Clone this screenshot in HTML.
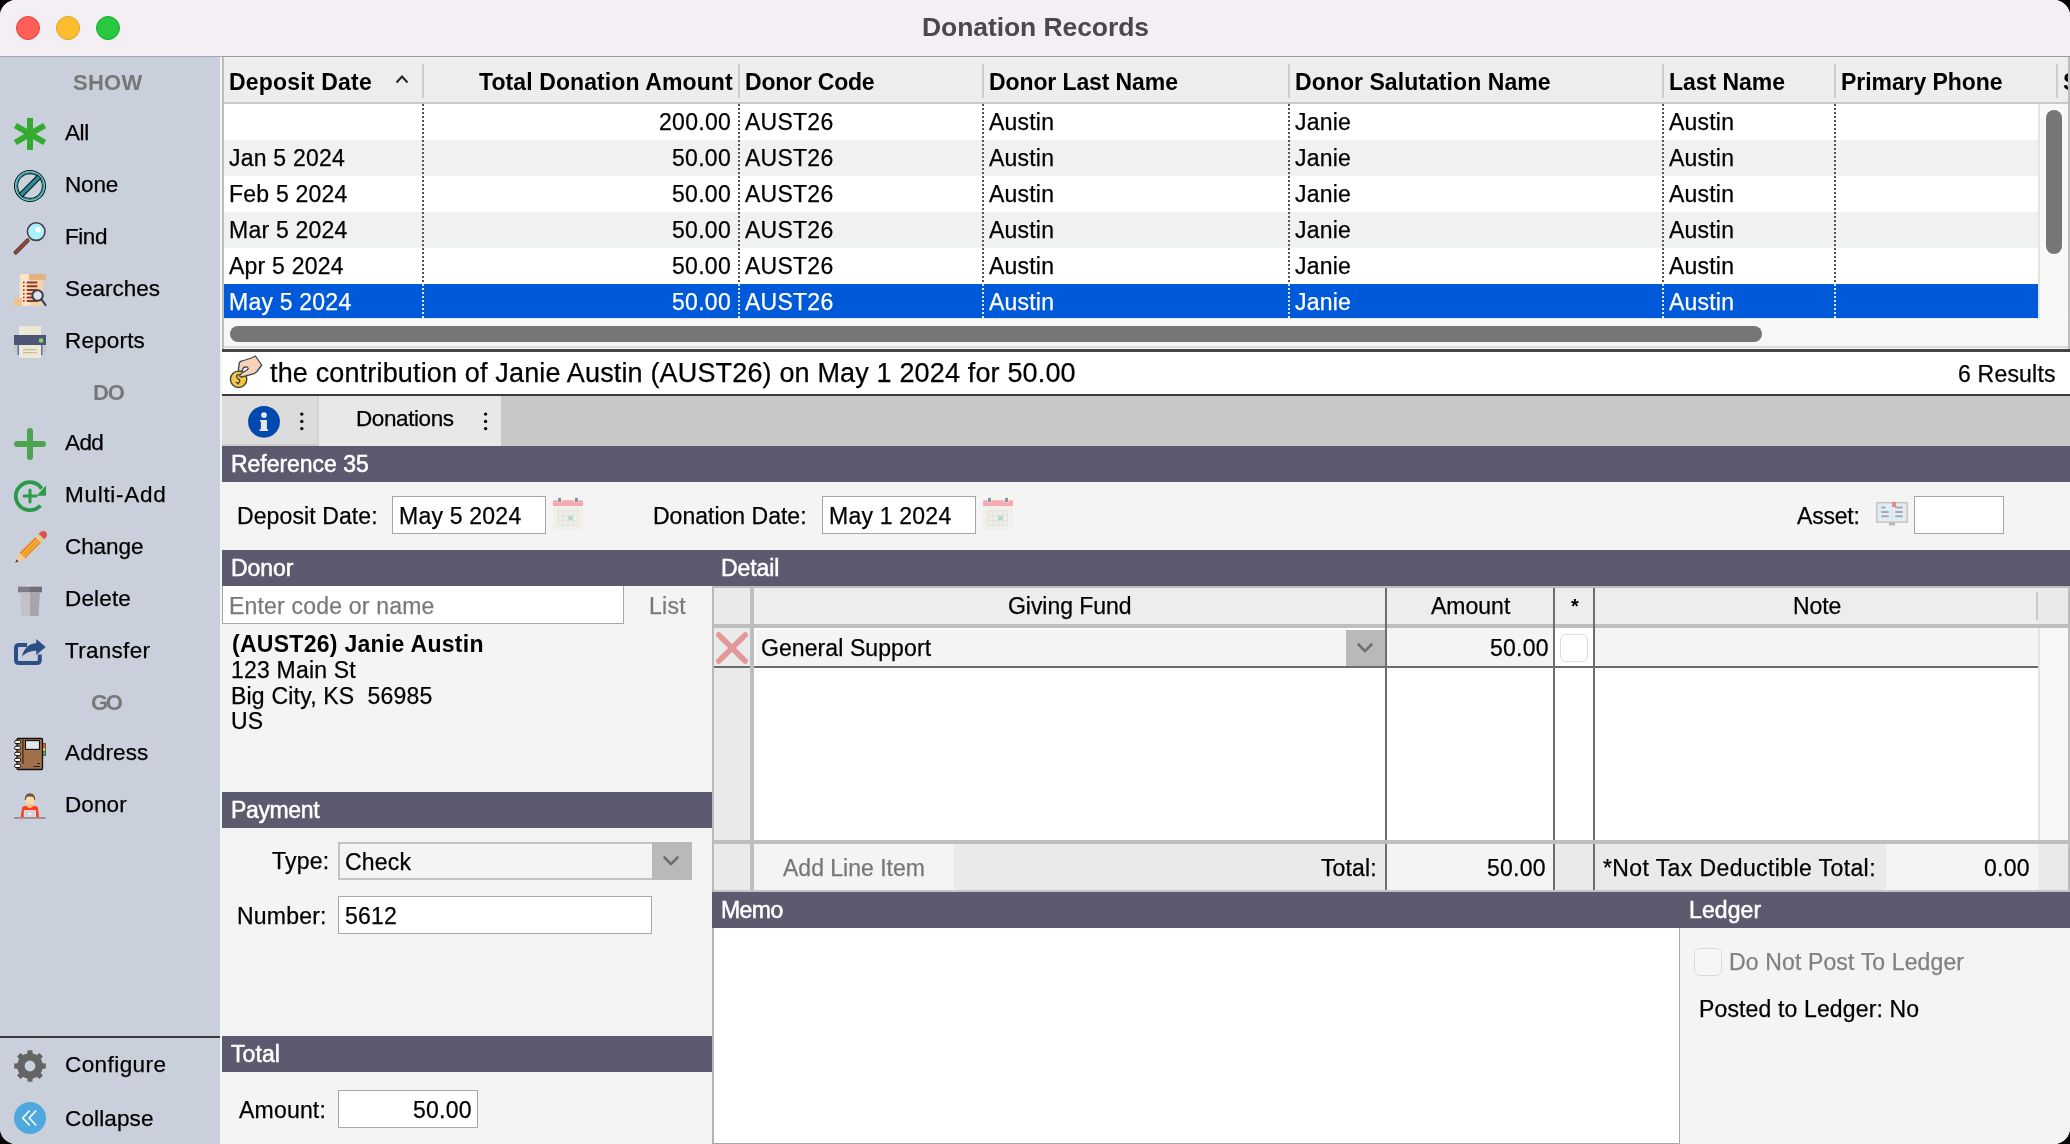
<!DOCTYPE html>
<html><head><meta charset="utf-8"><style>
html,body{margin:0;padding:0;background:#000;width:2070px;height:1144px;overflow:hidden;}
#win{-webkit-font-smoothing:antialiased;position:absolute;left:0;top:0;width:2070px;height:1144px;overflow:hidden;border-radius:16px;background:#f4f4f4;font-family:"Liberation Sans",sans-serif;}
#win>div,#win>svg{position:absolute;}
.t{white-space:pre;will-change:transform;-webkit-text-stroke:0.25px currentColor;}
</style></head><body><div id="win">
<div style="left:0px;top:0px;width:2070px;height:56px;background:#f4eff5;"></div>
<div style="left:0px;top:56px;width:222px;height:1px;background:#a3a9b2;"></div>
<div style="left:222px;top:56px;width:1848px;height:2px;background:#9c9c9c;"></div>
<svg style="left:16px;top:16px" width="24" height="24"><circle cx="12" cy="12" r="11.5" fill="#fe5f57" stroke="#e0443e" stroke-width="1"/></svg>
<svg style="left:56px;top:16px" width="24" height="24"><circle cx="12" cy="12" r="11.5" fill="#febc2e" stroke="#dea123" stroke-width="1"/></svg>
<svg style="left:96px;top:16px" width="24" height="24"><circle cx="12" cy="12" r="11.5" fill="#28c840" stroke="#1aab29" stroke-width="1"/></svg>
<div class="t" style="left:921.50px;top:9.82px;font-size:26.5px;line-height:34px;letter-spacing:-0.083px;color:#4b484d;font-weight:bold;-webkit-text-stroke:0;">Donation Records</div>
<div style="left:0px;top:57px;width:220px;height:1087px;background:#c9d0db;"></div>
<div style="left:0px;top:1036px;width:220px;height:2px;background:#3d3a3b;"></div>
<div class="t" style="left:72.75px;top:67.88px;font-size:22px;line-height:29px;letter-spacing:0.267px;color:#777777;font-weight:bold;-webkit-text-stroke:0;">SHOW</div>
<div class="t" style="left:93.05px;top:377.88px;font-size:22px;line-height:29px;letter-spacing:-1.100px;color:#777777;font-weight:bold;-webkit-text-stroke:0;">DO</div>
<div class="t" style="left:91.00px;top:687.88px;font-size:22px;line-height:29px;letter-spacing:-2.250px;color:#777777;font-weight:bold;-webkit-text-stroke:0;">GO</div>
<div class="t" style="left:64.60px;top:117.70px;font-size:22.5px;line-height:29px;letter-spacing:-0.400px;color:#000;">All</div>
<div class="t" style="left:64.60px;top:169.70px;font-size:22.5px;line-height:29px;letter-spacing:-0.183px;color:#000;">None</div>
<div class="t" style="left:64.60px;top:221.70px;font-size:22.5px;line-height:29px;letter-spacing:-0.450px;color:#000;">Find</div>
<div class="t" style="left:64.60px;top:273.70px;font-size:22.5px;line-height:29px;letter-spacing:0.000px;color:#000;">Searches</div>
<div class="t" style="left:64.60px;top:325.70px;font-size:22.5px;line-height:29px;letter-spacing:0.175px;color:#000;">Reports</div>
<div class="t" style="left:64.60px;top:427.70px;font-size:22.5px;line-height:29px;letter-spacing:-0.600px;color:#000;">Add</div>
<div class="t" style="left:64.60px;top:479.70px;font-size:22.5px;line-height:29px;letter-spacing:0.713px;color:#000;">Multi-Add</div>
<div class="t" style="left:64.60px;top:531.70px;font-size:22.5px;line-height:29px;letter-spacing:-0.070px;color:#000;">Change</div>
<div class="t" style="left:64.60px;top:583.70px;font-size:22.5px;line-height:29px;letter-spacing:0.160px;color:#000;">Delete</div>
<div class="t" style="left:64.60px;top:635.70px;font-size:22.5px;line-height:29px;letter-spacing:0.286px;color:#000;">Transfer</div>
<div class="t" style="left:64.60px;top:737.70px;font-size:22.5px;line-height:29px;letter-spacing:0.133px;color:#000;">Address</div>
<div class="t" style="left:64.60px;top:789.70px;font-size:22.5px;line-height:29px;letter-spacing:0.088px;color:#000;">Donor</div>
<div class="t" style="left:64.60px;top:1049.70px;font-size:22.5px;line-height:29px;letter-spacing:0.425px;color:#000;">Configure</div>
<div class="t" style="left:64.60px;top:1103.70px;font-size:22.5px;line-height:29px;letter-spacing:0.129px;color:#000;">Collapse</div>
<div style="left:220px;top:57px;width:1850px;height:1087px;background:#f4f4f4;"></div>
<div style="left:222px;top:57px;width:2px;height:293px;background:#bdbdbd;"></div>
<div style="left:224px;top:57px;width:1844px;height:45px;background:#ededed;"></div>
<div style="left:224px;top:102px;width:1844px;height:2px;background:#c9c9c9;"></div>
<div style="left:2068px;top:57px;width:2px;height:293px;background:#bdbdbd;"></div>
<div style="left:224px;top:104px;width:1814px;height:36px;background:#ffffff;"></div>
<div style="left:224px;top:140px;width:1814px;height:36px;background:#f0f1f1;"></div>
<div style="left:224px;top:176px;width:1814px;height:36px;background:#ffffff;"></div>
<div style="left:224px;top:212px;width:1814px;height:36px;background:#f0f1f1;"></div>
<div style="left:224px;top:248px;width:1814px;height:36px;background:#ffffff;"></div>
<div style="left:224px;top:284px;width:1814px;height:34px;background:#0059d9;"></div>
<div style="left:422px;top:64px;width:2px;height:34px;background:#cdcdcd;"></div>
<div style="left:738px;top:64px;width:2px;height:34px;background:#cdcdcd;"></div>
<div style="left:982px;top:64px;width:2px;height:34px;background:#cdcdcd;"></div>
<div style="left:1288px;top:64px;width:2px;height:34px;background:#cdcdcd;"></div>
<div style="left:1662px;top:64px;width:2px;height:34px;background:#cdcdcd;"></div>
<div style="left:1834px;top:64px;width:2px;height:34px;background:#cdcdcd;"></div>
<div style="left:2056px;top:64px;width:2px;height:34px;background:#cdcdcd;"></div>
<div style="left:422px;top:104px;width:2px;height:180px;background:repeating-linear-gradient(#555 0 2px,transparent 2px 4px)"></div>
<div style="left:422px;top:284px;width:2px;height:34px;background:repeating-linear-gradient(#dfe8f8 0 2px,transparent 2px 4px)"></div>
<div style="left:738px;top:104px;width:2px;height:180px;background:repeating-linear-gradient(#555 0 2px,transparent 2px 4px)"></div>
<div style="left:738px;top:284px;width:2px;height:34px;background:repeating-linear-gradient(#dfe8f8 0 2px,transparent 2px 4px)"></div>
<div style="left:982px;top:104px;width:2px;height:180px;background:repeating-linear-gradient(#555 0 2px,transparent 2px 4px)"></div>
<div style="left:982px;top:284px;width:2px;height:34px;background:repeating-linear-gradient(#dfe8f8 0 2px,transparent 2px 4px)"></div>
<div style="left:1288px;top:104px;width:2px;height:180px;background:repeating-linear-gradient(#555 0 2px,transparent 2px 4px)"></div>
<div style="left:1288px;top:284px;width:2px;height:34px;background:repeating-linear-gradient(#dfe8f8 0 2px,transparent 2px 4px)"></div>
<div style="left:1662px;top:104px;width:2px;height:180px;background:repeating-linear-gradient(#555 0 2px,transparent 2px 4px)"></div>
<div style="left:1662px;top:284px;width:2px;height:34px;background:repeating-linear-gradient(#dfe8f8 0 2px,transparent 2px 4px)"></div>
<div style="left:1834px;top:104px;width:2px;height:180px;background:repeating-linear-gradient(#555 0 2px,transparent 2px 4px)"></div>
<div style="left:1834px;top:284px;width:2px;height:34px;background:repeating-linear-gradient(#dfe8f8 0 2px,transparent 2px 4px)"></div>
<div class="t" style="left:229.00px;top:67.03px;font-size:23px;line-height:30px;letter-spacing:0.191px;color:#000;font-weight:bold;-webkit-text-stroke:0;">Deposit Date</div>
<svg style="left:395px;top:74px" width="14" height="10"><path d="M1.5 8.5 L7 2.5 L12.5 8.5" fill="none" stroke="#222" stroke-width="2"/></svg>
<div class="t" style="left:478.80px;top:67.03px;font-size:23px;line-height:30px;letter-spacing:0.097px;color:#000;font-weight:bold;-webkit-text-stroke:0;">Total Donation Amount</div>
<div class="t" style="left:745.00px;top:67.03px;font-size:23px;line-height:30px;letter-spacing:-0.222px;color:#000;font-weight:bold;-webkit-text-stroke:0;">Donor Code</div>
<div class="t" style="left:989.00px;top:67.03px;font-size:23px;line-height:30px;letter-spacing:-0.107px;color:#000;font-weight:bold;-webkit-text-stroke:0;">Donor Last Name</div>
<div class="t" style="left:1295.00px;top:67.03px;font-size:23px;line-height:30px;letter-spacing:0.062px;color:#000;font-weight:bold;-webkit-text-stroke:0;">Donor Salutation Name</div>
<div class="t" style="left:1669.00px;top:67.03px;font-size:23px;line-height:30px;letter-spacing:-0.031px;color:#000;font-weight:bold;-webkit-text-stroke:0;">Last Name</div>
<div class="t" style="left:1841.00px;top:67.03px;font-size:23px;line-height:30px;letter-spacing:-0.062px;color:#000;font-weight:bold;-webkit-text-stroke:0;">Primary Phone</div>
<div class="t" style="left:2062.50px;top:67.03px;font-size:23px;line-height:30px;letter-spacing:0.000px;color:#000;font-weight:bold;-webkit-text-stroke:0;">S</div>
<div style="left:2068px;top:57px;width:2px;height:293px;background:#bdbdbd;"></div>
<div class="t" style="left:659.35px;top:107.03px;font-size:23px;line-height:30px;letter-spacing:0.280px;color:#000;">200.00</div>
<div class="t" style="left:745.00px;top:107.03px;font-size:23px;line-height:30px;letter-spacing:0.250px;color:#000;">AUST26</div>
<div class="t" style="left:989.00px;top:107.03px;font-size:23px;line-height:30px;letter-spacing:0.200px;color:#000;">Austin</div>
<div class="t" style="left:1295.00px;top:107.03px;font-size:23px;line-height:30px;letter-spacing:0.200px;color:#000;">Janie</div>
<div class="t" style="left:1669.00px;top:107.03px;font-size:23px;line-height:30px;letter-spacing:0.200px;color:#000;">Austin</div>
<div class="t" style="left:229.00px;top:143.03px;font-size:23px;line-height:30px;letter-spacing:0.220px;color:#000;">Jan 5 2024</div>
<div class="t" style="left:672.38px;top:143.03px;font-size:23px;line-height:30px;letter-spacing:0.280px;color:#000;">50.00</div>
<div class="t" style="left:745.00px;top:143.03px;font-size:23px;line-height:30px;letter-spacing:0.250px;color:#000;">AUST26</div>
<div class="t" style="left:989.00px;top:143.03px;font-size:23px;line-height:30px;letter-spacing:0.200px;color:#000;">Austin</div>
<div class="t" style="left:1295.00px;top:143.03px;font-size:23px;line-height:30px;letter-spacing:0.200px;color:#000;">Janie</div>
<div class="t" style="left:1669.00px;top:143.03px;font-size:23px;line-height:30px;letter-spacing:0.200px;color:#000;">Austin</div>
<div class="t" style="left:229.00px;top:179.03px;font-size:23px;line-height:30px;letter-spacing:0.220px;color:#000;">Feb 5 2024</div>
<div class="t" style="left:672.38px;top:179.03px;font-size:23px;line-height:30px;letter-spacing:0.280px;color:#000;">50.00</div>
<div class="t" style="left:745.00px;top:179.03px;font-size:23px;line-height:30px;letter-spacing:0.250px;color:#000;">AUST26</div>
<div class="t" style="left:989.00px;top:179.03px;font-size:23px;line-height:30px;letter-spacing:0.200px;color:#000;">Austin</div>
<div class="t" style="left:1295.00px;top:179.03px;font-size:23px;line-height:30px;letter-spacing:0.200px;color:#000;">Janie</div>
<div class="t" style="left:1669.00px;top:179.03px;font-size:23px;line-height:30px;letter-spacing:0.200px;color:#000;">Austin</div>
<div class="t" style="left:229.00px;top:215.03px;font-size:23px;line-height:30px;letter-spacing:0.220px;color:#000;">Mar 5 2024</div>
<div class="t" style="left:672.38px;top:215.03px;font-size:23px;line-height:30px;letter-spacing:0.280px;color:#000;">50.00</div>
<div class="t" style="left:745.00px;top:215.03px;font-size:23px;line-height:30px;letter-spacing:0.250px;color:#000;">AUST26</div>
<div class="t" style="left:989.00px;top:215.03px;font-size:23px;line-height:30px;letter-spacing:0.200px;color:#000;">Austin</div>
<div class="t" style="left:1295.00px;top:215.03px;font-size:23px;line-height:30px;letter-spacing:0.200px;color:#000;">Janie</div>
<div class="t" style="left:1669.00px;top:215.03px;font-size:23px;line-height:30px;letter-spacing:0.200px;color:#000;">Austin</div>
<div class="t" style="left:229.00px;top:251.03px;font-size:23px;line-height:30px;letter-spacing:0.220px;color:#000;">Apr 5 2024</div>
<div class="t" style="left:672.38px;top:251.03px;font-size:23px;line-height:30px;letter-spacing:0.280px;color:#000;">50.00</div>
<div class="t" style="left:745.00px;top:251.03px;font-size:23px;line-height:30px;letter-spacing:0.250px;color:#000;">AUST26</div>
<div class="t" style="left:989.00px;top:251.03px;font-size:23px;line-height:30px;letter-spacing:0.200px;color:#000;">Austin</div>
<div class="t" style="left:1295.00px;top:251.03px;font-size:23px;line-height:30px;letter-spacing:0.200px;color:#000;">Janie</div>
<div class="t" style="left:1669.00px;top:251.03px;font-size:23px;line-height:30px;letter-spacing:0.200px;color:#000;">Austin</div>
<div class="t" style="left:229.00px;top:287.03px;font-size:23px;line-height:30px;letter-spacing:0.220px;color:#ffffff;">May 5 2024</div>
<div class="t" style="left:672.38px;top:287.03px;font-size:23px;line-height:30px;letter-spacing:0.280px;color:#ffffff;">50.00</div>
<div class="t" style="left:745.00px;top:287.03px;font-size:23px;line-height:30px;letter-spacing:0.250px;color:#ffffff;">AUST26</div>
<div class="t" style="left:989.00px;top:287.03px;font-size:23px;line-height:30px;letter-spacing:0.200px;color:#ffffff;">Austin</div>
<div class="t" style="left:1295.00px;top:287.03px;font-size:23px;line-height:30px;letter-spacing:0.200px;color:#ffffff;">Janie</div>
<div class="t" style="left:1669.00px;top:287.03px;font-size:23px;line-height:30px;letter-spacing:0.200px;color:#ffffff;">Austin</div>
<div style="left:2038px;top:104px;width:30px;height:214px;background:#f8f8f8;"></div>
<div style="left:2038px;top:104px;width:2px;height:214px;background:#e4e4e4;"></div>
<div style="left:2046px;top:110px;width:16px;height:144px;background:#767676;border-radius:8px;"></div>
<div style="left:224px;top:318px;width:1844px;height:30px;background:#f7f7f7;"></div>
<div style="left:224px;top:318px;width:1814px;height:1px;background:#e6e6e6;"></div>
<div style="left:224px;top:346px;width:1844px;height:2px;background:#dcdcdc;"></div>
<div style="left:230px;top:326px;width:1532px;height:16px;background:#767676;border-radius:8px;"></div>
<div style="left:222px;top:349px;width:1848px;height:3px;background:#454545;"></div>
<div style="left:222px;top:352px;width:1848px;height:42px;background:#ffffff;"></div>
<div style="left:222px;top:394px;width:1848px;height:2px;background:#3d3d3d;"></div>
<div class="t" style="left:270.00px;top:356.14px;font-size:27px;line-height:35px;letter-spacing:0.158px;color:#000;">the contribution of Janie Austin (AUST26) on May 1 2024 for 50.00</div>
<div class="t" style="left:1958.40px;top:359.03px;font-size:23px;line-height:30px;letter-spacing:0.200px;color:#000;">6 Results</div>
<div style="left:222px;top:396px;width:1848px;height:50px;background:#c8c8c8;"></div>
<div style="left:222px;top:396px;width:95px;height:50px;background:#dcdcdc;"></div>
<div style="left:222px;top:444px;width:95px;height:2px;background:#cccccc;"></div>
<div style="left:317px;top:396px;width:2px;height:50px;background:#d3d3d3;"></div>
<div style="left:319px;top:396px;width:182px;height:50px;background:#e8e8e8;"></div>
<div class="t" style="left:355.50px;top:403.70px;font-size:22.5px;line-height:29px;letter-spacing:-0.406px;color:#000;">Donations</div>
<div style="left:222px;top:446px;width:1848px;height:36px;background:#5c5a6e;"></div>
<div class="t" style="left:231.00px;top:449.03px;font-size:23px;line-height:30px;letter-spacing:-0.036px;color:#fff;-webkit-text-stroke:0.5px #fff;">Reference 35</div>
<div style="left:222px;top:550px;width:490px;height:36px;background:#5c5a6e;"></div>
<div style="left:712px;top:550px;width:1358px;height:36px;background:#5c5a6e;"></div>
<div class="t" style="left:230.60px;top:553.03px;font-size:23px;line-height:30px;letter-spacing:-0.088px;color:#fff;-webkit-text-stroke:0.5px #fff;">Donor</div>
<div class="t" style="left:721.00px;top:553.03px;font-size:23px;line-height:30px;letter-spacing:-0.090px;color:#fff;-webkit-text-stroke:0.5px #fff;">Detail</div>
<div style="left:222px;top:792px;width:490px;height:36px;background:#5c5a6e;"></div>
<div class="t" style="left:231.00px;top:794.53px;font-size:23px;line-height:30px;letter-spacing:-0.358px;color:#fff;-webkit-text-stroke:0.5px #fff;">Payment</div>
<div style="left:222px;top:1036px;width:490px;height:36px;background:#5c5a6e;"></div>
<div class="t" style="left:231.00px;top:1038.53px;font-size:23px;line-height:30px;letter-spacing:0.075px;color:#fff;-webkit-text-stroke:0.5px #fff;">Total</div>
<div style="left:712px;top:892px;width:1358px;height:36px;background:#5c5a6e;"></div>
<div class="t" style="left:721.00px;top:895.03px;font-size:23px;line-height:30px;letter-spacing:-0.567px;color:#fff;-webkit-text-stroke:0.5px #fff;">Memo</div>
<div class="t" style="left:1689.00px;top:894.53px;font-size:23px;line-height:30px;letter-spacing:0.090px;color:#fff;-webkit-text-stroke:0.5px #fff;">Ledger</div>
<div class="t" style="left:237.00px;top:501.03px;font-size:23px;line-height:30px;letter-spacing:0.104px;color:#000;">Deposit Date:</div>
<div style="left:392px;top:496px;width:154px;height:38px;background:#fff;box-sizing:border-box;border:1px solid #a5a5a5;"></div>
<div class="t" style="left:399.00px;top:501.03px;font-size:23px;line-height:30px;letter-spacing:0.220px;color:#000;">May 5 2024</div>
<div class="t" style="left:653.00px;top:501.03px;font-size:23px;line-height:30px;letter-spacing:0.008px;color:#000;">Donation Date:</div>
<div style="left:822px;top:496px;width:154px;height:38px;background:#fff;box-sizing:border-box;border:1px solid #a5a5a5;"></div>
<div class="t" style="left:829.00px;top:501.03px;font-size:23px;line-height:30px;letter-spacing:0.220px;color:#000;">May 1 2024</div>
<div class="t" style="left:1797.00px;top:501.03px;font-size:23px;line-height:30px;letter-spacing:-0.200px;color:#000;">Asset:</div>
<div style="left:1914px;top:496px;width:90px;height:38px;background:#fff;box-sizing:border-box;border:1px solid #a5a5a5;"></div>
<div style="left:222px;top:586px;width:402px;height:38px;background:#fff;box-sizing:border-box;border:1px solid #a8a8a8;border-top:none;"></div>
<div class="t" style="left:229.00px;top:591.03px;font-size:23px;line-height:30px;letter-spacing:0.200px;color:#7a7a7a;">Enter code or name</div>
<div class="t" style="left:649.00px;top:591.03px;font-size:23px;line-height:30px;letter-spacing:0.300px;color:#7a7a7a;">List</div>
<div class="t" style="left:231.60px;top:628.63px;font-size:23px;line-height:30px;letter-spacing:0.283px;color:#000;font-weight:bold;-webkit-text-stroke:0;">(AUST26) Janie Austin</div>
<div class="t" style="left:231.00px;top:654.73px;font-size:23px;line-height:30px;letter-spacing:0.200px;color:#000;">123 Main St</div>
<div class="t" style="left:231.00px;top:680.83px;font-size:23px;line-height:30px;letter-spacing:0.200px;color:#000;">Big City, KS  56985</div>
<div class="t" style="left:231.00px;top:706.43px;font-size:23px;line-height:30px;letter-spacing:0.200px;color:#000;">US</div>
<div class="t" style="left:271.65px;top:846.03px;font-size:23px;line-height:30px;letter-spacing:0.200px;color:#000;">Type:</div>
<div style="left:338px;top:842px;width:354px;height:38px;background:#f4f4f4;box-sizing:border-box;border:2px solid #c2c2c2;"></div>
<div style="left:652px;top:842px;width:40px;height:38px;background:#b9b9b9;"></div>
<div class="t" style="left:344.50px;top:847.03px;font-size:23px;line-height:30px;letter-spacing:0.200px;color:#000;">Check</div>
<div class="t" style="left:237.35px;top:901.03px;font-size:23px;line-height:30px;letter-spacing:0.200px;color:#000;">Number:</div>
<div style="left:338px;top:896px;width:314px;height:38px;background:#fff;box-sizing:border-box;border:1px solid #a8a8a8;"></div>
<div class="t" style="left:344.50px;top:901.03px;font-size:23px;line-height:30px;letter-spacing:0.200px;color:#000;">5612</div>
<div class="t" style="left:239.35px;top:1094.53px;font-size:23px;line-height:30px;letter-spacing:0.200px;color:#000;">Amount:</div>
<div style="left:338px;top:1090px;width:140px;height:38px;background:#fff;box-sizing:border-box;border:1px solid #a8a8a8;"></div>
<div class="t" style="left:412.70px;top:1094.53px;font-size:23px;line-height:30px;letter-spacing:0.250px;color:#000;">50.00</div>
<div style="left:712px;top:586px;width:1358px;height:306px;background:#ffffff;"></div>
<div style="left:712px;top:586px;width:2px;height:306px;background:#b9b9b9;"></div>
<div style="left:712px;top:586px;width:1358px;height:2px;background:#bdbdbd;"></div>
<div style="left:2068px;top:586px;width:2px;height:306px;background:#bdbdbd;"></div>
<div style="left:714px;top:588px;width:1354px;height:36px;background:#ededed;"></div>
<div style="left:714px;top:588px;width:36px;height:302px;background:#eaeaea;"></div>
<div style="left:750px;top:588px;width:4px;height:302px;background:#bebebe;"></div>
<div style="left:714px;top:624px;width:1354px;height:4px;background:#bebebe;"></div>
<div style="left:714px;top:840px;width:1354px;height:4px;background:#bebebe;"></div>
<div style="left:714px;top:890px;width:1356px;height:2px;background:#c4c4c4;"></div>
<div style="left:2038px;top:628px;width:30px;height:212px;background:#f7f7f7;"></div>
<div style="left:2038px;top:628px;width:2px;height:212px;background:#e2e2e2;"></div>
<div style="left:2038px;top:588px;width:30px;height:36px;background:#eaeaea;"></div>
<div style="left:2036px;top:592px;width:2px;height:28px;background:#c9c9c9;"></div>
<div style="left:756px;top:630px;width:590px;height:36px;background:#f4f4f4;"></div>
<div style="left:1346px;top:630px;width:39px;height:36px;background:#b9b9b9;"></div>
<div style="left:1387px;top:628px;width:166px;height:38px;background:#f4f4f4;"></div>
<div style="left:1595px;top:628px;width:443px;height:38px;background:#f4f4f4;"></div>
<div style="left:714px;top:666px;width:1324px;height:2px;background:#6b6b6b;"></div>
<div style="left:750px;top:628px;width:4px;height:212px;background:#bebebe;"></div>
<div style="left:754px;top:844px;width:1284px;height:46px;background:#eaeaea;"></div>
<div style="left:754px;top:844px;width:200px;height:46px;background:#f4f4f4;"></div>
<div style="left:1387px;top:844px;width:166px;height:46px;background:#f4f4f4;"></div>
<div style="left:1886px;top:844px;width:152px;height:46px;background:#f4f4f4;"></div>
<div style="left:2038px;top:844px;width:30px;height:46px;background:#eaeaea;"></div>
<div style="left:1385px;top:588px;width:2px;height:252px;background:#6e6e6e;"></div>
<div style="left:1385px;top:844px;width:2px;height:46px;background:#6e6e6e;"></div>
<div style="left:1553px;top:588px;width:2px;height:252px;background:#6e6e6e;"></div>
<div style="left:1553px;top:844px;width:2px;height:46px;background:#6e6e6e;"></div>
<div style="left:1593px;top:588px;width:2px;height:252px;background:#6e6e6e;"></div>
<div style="left:1593px;top:844px;width:2px;height:46px;background:#6e6e6e;"></div>
<div class="t" style="left:1008.25px;top:591.03px;font-size:23px;line-height:30px;letter-spacing:-0.050px;color:#000;">Giving Fund</div>
<div class="t" style="left:1431.35px;top:591.03px;font-size:23px;line-height:30px;letter-spacing:0.010px;color:#000;">Amount</div>
<div class="t" style="left:1571.00px;top:592.57px;font-size:20px;line-height:26px;letter-spacing:0.000px;color:#000;font-weight:bold;-webkit-text-stroke:0;">*</div>
<div class="t" style="left:1792.85px;top:591.03px;font-size:23px;line-height:30px;letter-spacing:-0.067px;color:#000;">Note</div>
<div class="t" style="left:761.00px;top:633.03px;font-size:23px;line-height:30px;letter-spacing:0.089px;color:#000;">General Support</div>
<div class="t" style="left:1490.30px;top:632.53px;font-size:23px;line-height:30px;letter-spacing:0.250px;color:#000;">50.00</div>
<div style="left:1560px;top:634px;width:28px;height:28px;background:#fff;box-sizing:border-box;border:1px solid #dcdcdc;border-radius:6px;"></div>
<div class="t" style="left:782.60px;top:853.03px;font-size:23px;line-height:30px;letter-spacing:0.000px;color:#777;">Add Line Item</div>
<div class="t" style="left:1321.00px;top:853.03px;font-size:23px;line-height:30px;letter-spacing:0.120px;color:#000;">Total:</div>
<div class="t" style="left:1486.50px;top:853.03px;font-size:23px;line-height:30px;letter-spacing:0.250px;color:#000;">50.00</div>
<div class="t" style="left:1602.70px;top:853.03px;font-size:23px;line-height:30px;letter-spacing:0.400px;color:#000;">*Not Tax Deductible Total:</div>
<div class="t" style="left:1983.50px;top:853.03px;font-size:23px;line-height:30px;letter-spacing:0.250px;color:#000;">0.00</div>
<div style="left:712px;top:928px;width:968px;height:216px;background:#ffffff;"></div>
<div style="left:712px;top:928px;width:2px;height:216px;background:#b4b4b4;"></div>
<div style="left:1679px;top:928px;width:1px;height:216px;background:#a9a9a9;"></div>
<div style="left:712px;top:1143px;width:968px;height:1px;background:#a9a9a9;"></div>
<div style="left:1694px;top:948px;width:28px;height:28px;background:#f6f6f6;box-sizing:border-box;border:1px solid #dadada;border-radius:6px;"></div>
<div class="t" style="left:1729.00px;top:947.03px;font-size:23px;line-height:30px;letter-spacing:0.138px;color:#808080;">Do Not Post To Ledger</div>
<div class="t" style="left:1699.00px;top:994.03px;font-size:23px;line-height:30px;letter-spacing:0.142px;color:#000;">Posted to Ledger: No</div>
<svg style="left:10px;top:114px" width="40" height="40" viewBox="0 0 40 40"><g stroke="#34aa30" stroke-width="6" stroke-linecap="butt"><line x1="20" y1="4" x2="20" y2="36"/><line x1="5.4" y1="11.5" x2="34.6" y2="28.5"/><line x1="5.4" y1="28.5" x2="34.6" y2="11.5"/></g></svg>
<svg style="left:10px;top:166px" width="40" height="40" viewBox="0 0 40 40"><circle cx="20" cy="20" r="12.4" fill="#c8d3dc" stroke="#0e1418" stroke-width="1.1"/><circle cx="20" cy="20" r="15.4" fill="none" stroke="#0e1418" stroke-width="1.3"/><circle cx="20" cy="20" r="13.9" fill="none" stroke="#2b8d99" stroke-width="2.3"/><circle cx="20" cy="20" r="14.5" fill="none" stroke="#bfeff2" stroke-width="0.6"/><line x1="10.6" y1="29.4" x2="29.4" y2="10.6" stroke="#0e1418" stroke-width="5.6"/><line x1="11" y1="29" x2="29" y2="11" stroke="#2b8d99" stroke-width="3.4"/></svg>
<svg style="left:10px;top:218px" width="40" height="40" viewBox="0 0 40 40"><line x1="17.5" y1="22.4" x2="12.5" y2="27.4" stroke="#8a8f98" stroke-width="1.2"/><line x1="17.6" y1="22.6" x2="5.6" y2="34.4" stroke="#5a3434" stroke-width="4.2" stroke-linecap="round"/><line x1="17.6" y1="22.6" x2="5.6" y2="34.4" stroke="#8d4d3e" stroke-width="2.4" stroke-linecap="round"/><circle cx="26.2" cy="13.6" r="8.8" fill="#aaf0fa" stroke="#4a3f4c" stroke-width="1.6"/><circle cx="28.2" cy="11.8" r="2.8" fill="#fff"/></svg>
<svg style="left:10px;top:270px" width="40" height="40" viewBox="0 0 40 40"><path d="M9.7 5.5 Q9.7 4 12 4 L33 4 L33 30 Q33 35.8 30 35.8 L9.7 35.8 Z" fill="#fde3c4"/><path d="M20 4 L33 4 L33 35.8 L20 35.8 Z" fill="#f7d2a8"/><path d="M19 4 L34 4 Q36 4 36 6 L36 10 L19 10 Z" fill="#e5b37f"/><path d="M4 28 L12 28 L12 35.8 L6 35.8 Q4 35.8 4 34 Z" fill="#f1c28d"/><circle cx="13.8" cy="12.5" r="0.9" fill="#8b3a28"/><rect x="16.5" y="11.5" width="11" height="2" rx="1" fill="#8b3a28"/><circle cx="13.8" cy="16.2" r="0.9" fill="#8b3a28"/><rect x="16.5" y="15.2" width="11" height="2" rx="1" fill="#8b3a28"/><circle cx="13.8" cy="20" r="0.9" fill="#8b3a28"/><rect x="16.5" y="19" width="11" height="2" rx="1" fill="#8b3a28"/><circle cx="13.8" cy="23.7" r="0.9" fill="#8b3a28"/><rect x="16.5" y="22.7" width="11" height="2" rx="1" fill="#8b3a28"/><circle cx="13.8" cy="27.4" r="0.9" fill="#8b3a28"/><rect x="16.5" y="26.4" width="11" height="2" rx="1" fill="#8b3a28"/><circle cx="13.8" cy="31" r="0.9" fill="#8b3a28"/><rect x="16.5" y="30" width="11" height="2" rx="1" fill="#8b3a28"/><circle cx="27.6" cy="25.5" r="5.2" fill="#dce3f0" stroke="#3a3f4a" stroke-width="2"/><line x1="31.4" y1="29.4" x2="35.6" y2="35.2" stroke="#3a3f4a" stroke-width="2" stroke-linecap="round"/></svg>
<svg style="left:10px;top:322px" width="40" height="40" viewBox="0 0 40 40"><rect x="9" y="4" width="22" height="10" fill="#ede8d6"/><rect x="4" y="13" width="32" height="10" fill="#4b5677"/><circle cx="31" cy="18.5" r="2.3" fill="#86d65c"/><rect x="4" y="23" width="4" height="7" fill="#c6c7c3"/><rect x="32" y="23" width="4" height="7" fill="#c6c7c3"/><rect x="7.5" y="23" width="2" height="10" fill="#5a6fb5"/><rect x="30.5" y="23" width="2" height="10" fill="#5a6fb5"/><rect x="9" y="23" width="22" height="13" fill="#ede8d6"/><rect x="13" y="27" width="14" height="1.2" fill="#c9bc98"/><rect x="13" y="30" width="14" height="1.2" fill="#c9bc98"/></svg>
<svg style="left:10px;top:424px" width="40" height="40" viewBox="0 0 40 40"><g stroke="#4ca64f" stroke-width="6" stroke-linecap="round"><line x1="20" y1="7" x2="20" y2="33"/><line x1="7" y1="20" x2="33" y2="20"/></g></svg>
<svg style="left:10px;top:476px" width="40" height="40" viewBox="0 0 40 40"><path d="M30.4 29.4 A14 14 0 1 1 31.6 12.6" fill="none" stroke="#2b9a48" stroke-width="3.8"/><path d="M36 9.5 L36 19.8 L26.5 19.8 Z" fill="#2b9a48"/><g stroke="#2b9a48" stroke-width="3" stroke-linecap="round"><line x1="20" y1="14" x2="20" y2="26"/><line x1="14" y1="20" x2="26" y2="20"/></g></svg>
<svg style="left:10px;top:528px" width="40" height="40" viewBox="0 0 40 40"><g transform="translate(20,20) rotate(-45) scale(1.2,1.05)"><rect x="-9" y="-3.8" width="19" height="7.6" fill="#f08a24"/><rect x="-9" y="-1.4" width="19" height="1" fill="#f7c948"/><rect x="-9" y="1" width="19" height="1" fill="#f7c948"/><rect x="10" y="-3.8" width="3.5" height="7.6" fill="#efe2b0"/><rect x="10.8" y="-3.8" width="0.8" height="7.6" fill="#cdbf8a"/><rect x="12.3" y="-3.8" width="0.8" height="7.6" fill="#cdbf8a"/><path d="M13.5 -3.8 L15 -3.8 A3.8 3.8 0 0 1 15 3.8 L13.5 3.8 Z" fill="#d9534f"/><path d="M-9 -3.8 L-17 0 L-9 3.8 Z" fill="#fcc68f"/><path d="M-14.5 -1.2 L-17.5 0 L-14.5 1.2 Z" fill="#333"/></g></svg>
<svg style="left:10px;top:580px" width="40" height="40" viewBox="0 0 40 40"><rect x="16" y="4" width="8" height="3" rx="1" fill="#d6d5d8"/><rect x="8" y="6.7" width="12" height="5.7" fill="#7f7e86"/><rect x="20" y="6.7" width="12" height="5.7" fill="#6e6d76"/><path d="M10 12.4 L20 12.4 L20 36 L11.5 36 Z" fill="#c3c0c6"/><path d="M20 12.4 L30 12.4 L28.5 36 L20 36 Z" fill="#a7a5ac"/></svg>
<svg style="left:10px;top:634px" width="40" height="40" viewBox="0 0 40 40"><path d="M17 10.9 H9 Q6 10.9 6 13.9 V26 Q6 29 9 29 H26.8 Q29.8 29 29.8 26 V20.5" fill="none" stroke="#2a4f86" stroke-width="4"/><path d="M12 22.7 C13.5 14.5 19 9.6 26.2 9.2 V4.9 L35.7 13 L26.2 21 V16.8 C20 16.8 15.5 19 12 22.7 Z" fill="#2a4f86"/></svg>
<svg style="left:10px;top:734px" width="40" height="40" viewBox="0 0 40 40"><rect x="32" y="9.3" width="3.7" height="12.4" fill="#111"/><rect x="32.4" y="9.8" width="2.8" height="3.6" fill="#ff5a1f"/><rect x="32.4" y="13.6" width="2.8" height="3.6" fill="#ffd04a"/><rect x="32.4" y="17.4" width="2.8" height="3.8" fill="#3fb54f"/><rect x="7" y="4.5" width="25.5" height="31" rx="1" fill="#a0714a" stroke="#111" stroke-width="1.3"/><rect x="12.2" y="5.5" width="1.4" height="24.5" fill="#4a3020"/><rect x="15.5" y="6.6" width="14" height="8.8" fill="#e2e6e9" stroke="#111" stroke-width="1.1"/><rect x="27" y="29" width="3" height="1" fill="#222"/><rect x="23.5" y="32" width="6.5" height="1" fill="#222"/><rect x="4.6" y="6.300000000000001" width="6" height="3.2" rx="1.4" fill="#fff" stroke="#111" stroke-width="1"/><rect x="4.6" y="12.200000000000001" width="6" height="3.2" rx="1.4" fill="#fff" stroke="#111" stroke-width="1"/><rect x="4.6" y="18.299999999999997" width="6" height="3.2" rx="1.4" fill="#fff" stroke="#111" stroke-width="1"/><rect x="4.6" y="24.299999999999997" width="6" height="3.2" rx="1.4" fill="#fff" stroke="#111" stroke-width="1"/><rect x="4.6" y="30.299999999999997" width="6" height="3.2" rx="1.4" fill="#fff" stroke="#111" stroke-width="1"/></svg>
<svg style="left:10px;top:788px" width="40" height="40" viewBox="0 0 40 40"><rect x="4" y="29" width="31.8" height="1.9" fill="#a88c8c"/><path d="M10.8 29 L12 20 Q12.5 18 15 18 L25 18 Q27.5 18 28 20 L29 29 Z" fill="#ff3d1a"/><path d="M17 16 L22.7 16 L22.7 19 L19.8 20.3 L17 19 Z" fill="#ffb98a"/><rect x="15.9" y="9" width="8.4" height="7.6" rx="3" fill="#ffdba4"/><path d="M14.7 12 Q14.6 5.2 20 5.2 Q25.4 5.2 25.2 12 L24.3 12 Q24 9 22 8.6 L17.5 8.6 Q16 9 15.9 12 Z" fill="#7a4a3a"/><rect x="13.8" y="22.2" width="12.2" height="6.8" fill="#e6ecf2"/><rect x="14.6" y="23" width="10.6" height="6" fill="#d0d5dd"/><rect x="19" y="25" width="2" height="2" fill="#fff"/></svg>
<svg style="left:10px;top:1046px" width="40" height="40" viewBox="0 0 40 40"><path d="M32.30 17.25 L35.82 17.61 L35.82 22.39 L32.30 22.75 L30.64 26.75 L32.88 29.50 L29.50 32.88 L26.75 30.64 L22.75 32.30 L22.39 35.82 L17.61 35.82 L17.25 32.30 L13.25 30.64 L10.50 32.88 L7.12 29.50 L9.36 26.75 L7.70 22.75 L4.18 22.39 L4.18 17.61 L7.70 17.25 L9.36 13.25 L7.12 10.50 L10.50 7.12 L13.25 9.36 L17.25 7.70 L17.61 4.18 L22.39 4.18 L22.75 7.70 L26.75 9.36 L29.50 7.12 L32.88 10.50 L30.64 13.25 Z" fill="#646464"/><circle cx="20" cy="20" r="12.8" fill="#646464"/><circle cx="20" cy="20" r="5.4" fill="#c9d0db"/></svg>
<svg style="left:10px;top:1098px" width="40" height="40" viewBox="0 0 40 40"><circle cx="20" cy="20" r="16" fill="#4fa8dd"/><g fill="none" stroke="#fff" stroke-width="1.6"><path d="M19.7 12.5 L12.7 20 L19.7 27.5"/><path d="M26.2 12.5 L19.2 20 L26.2 27.5"/></g></svg>
<svg style="left:226px;top:352px" width="40" height="40" viewBox="0 0 40 40"><circle cx="12.6" cy="27.3" r="8.2" fill="#f9c83a" stroke="#3a4750" stroke-width="1.4"/><path d="M14.6 23.6 Q12.5 21.8 10.8 23.4 Q9.8 25 12 26.6 Q14.6 28.2 13.4 30.2 Q11.8 31.8 9.8 30.2 M12.2 21.8 V23 M12.3 30.8 V32.4" fill="none" stroke="#3a4750" stroke-width="1.3"/><path d="M12.3 18.9 L13.3 10.8 Q14 9.4 16 9 L25.5 6 L29.4 4 L35.7 13 L31 19.5 L28 21.7 L20 23.8 L15.6 25 Q13.2 24.8 13.8 23.4 L16.5 20.3 L20.5 18.5 L22.3 16.6 Q21.5 14.6 19.5 15 Q17.6 15.4 17.2 16.2 L16 19.2 Z" fill="#f7d2b7" stroke="#3a4750" stroke-width="1.3" stroke-linejoin="round"/></svg>
<svg style="left:244px;top:402px" width="40" height="40" viewBox="0 0 40 40"><circle cx="20" cy="19.8" r="15.9" fill="#004aad"/><circle cx="20" cy="13.1" r="2.9" fill="#e8e8e8"/><path d="M16 17.9 H22.9 V27.2 H24.1 V29 H15.5 V27.2 H16.9 V19.6 H16 Z" fill="#e8e8e8"/></svg>
<svg style="left:298px;top:406px" width="8" height="30" viewBox="0 0 8 30"><circle cx="3.80" cy="8.10" r="1.7" fill="#000"/><circle cx="3.80" cy="15.40" r="1.7" fill="#000"/><circle cx="3.80" cy="22.60" r="1.7" fill="#000"/></svg>
<svg style="left:482px;top:406px" width="8" height="30" viewBox="0 0 8 30"><circle cx="3.60" cy="8.10" r="1.7" fill="#000"/><circle cx="3.60" cy="15.40" r="1.7" fill="#000"/><circle cx="3.60" cy="22.60" r="1.7" fill="#000"/></svg>
<svg style="left:548px;top:494px" width="40" height="40" viewBox="0 0 40 40"><rect x="5" y="12" width="30" height="23.7" fill="#f0efea"/><rect x="5" y="6.3" width="30" height="5.6" rx="1" fill="#f7a9b0"/><rect x="9.6" y="3.4" width="3.8" height="5" fill="#fff"/><rect x="26.6" y="3.4" width="3.8" height="5" fill="#fff"/><rect x="10" y="3.8" width="3" height="4.3" fill="#8f96a0"/><rect x="27" y="3.8" width="3" height="4.3" fill="#8f96a0"/><rect x="9.8" y="16.3" width="20.2" height="15.5" fill="#e2e0d5"/><rect x="10.80" y="17.30" width="3.9" height="3.9" fill="#f0efea"/><rect x="15.70" y="17.30" width="3.9" height="3.9" fill="#f0efea"/><rect x="20.60" y="17.30" width="3.9" height="3.9" fill="#f0efea"/><rect x="25.50" y="17.30" width="3.9" height="3.9" fill="#f0efea"/><rect x="10.80" y="22.20" width="3.9" height="3.9" fill="#f0efea"/><rect x="15.70" y="22.20" width="3.9" height="3.9" fill="#f0efea"/><rect x="20.60" y="22.20" width="3.9" height="3.9" fill="#9fdccb"/><rect x="25.50" y="22.20" width="3.9" height="3.9" fill="#f0efea"/><rect x="10.80" y="27.10" width="3.9" height="3.9" fill="#f0efea"/><rect x="15.70" y="27.10" width="3.9" height="3.9" fill="#f0efea"/><rect x="20.60" y="27.10" width="3.9" height="3.9" fill="#f0efea"/><rect x="25.50" y="27.10" width="3.9" height="3.9" fill="#f0efea"/></svg>
<svg style="left:978px;top:494px" width="40" height="40" viewBox="0 0 40 40"><rect x="5" y="12" width="30" height="23.7" fill="#f0efea"/><rect x="5" y="6.3" width="30" height="5.6" rx="1" fill="#f7a9b0"/><rect x="9.6" y="3.4" width="3.8" height="5" fill="#fff"/><rect x="26.6" y="3.4" width="3.8" height="5" fill="#fff"/><rect x="10" y="3.8" width="3" height="4.3" fill="#8f96a0"/><rect x="27" y="3.8" width="3" height="4.3" fill="#8f96a0"/><rect x="9.8" y="16.3" width="20.2" height="15.5" fill="#e2e0d5"/><rect x="10.80" y="17.30" width="3.9" height="3.9" fill="#f0efea"/><rect x="15.70" y="17.30" width="3.9" height="3.9" fill="#f0efea"/><rect x="20.60" y="17.30" width="3.9" height="3.9" fill="#f0efea"/><rect x="25.50" y="17.30" width="3.9" height="3.9" fill="#f0efea"/><rect x="10.80" y="22.20" width="3.9" height="3.9" fill="#f0efea"/><rect x="15.70" y="22.20" width="3.9" height="3.9" fill="#f0efea"/><rect x="20.60" y="22.20" width="3.9" height="3.9" fill="#9fdccb"/><rect x="25.50" y="22.20" width="3.9" height="3.9" fill="#f0efea"/><rect x="10.80" y="27.10" width="3.9" height="3.9" fill="#f0efea"/><rect x="15.70" y="27.10" width="3.9" height="3.9" fill="#f0efea"/><rect x="20.60" y="27.10" width="3.9" height="3.9" fill="#f0efea"/><rect x="25.50" y="27.10" width="3.9" height="3.9" fill="#f0efea"/></svg>
<svg style="left:1872px;top:496px" width="40" height="34" viewBox="0 0 40 34"><rect x="17" y="26" width="6" height="3.5" fill="#c3b8ae"/><rect x="4.8" y="6.7" width="30.4" height="19.4" fill="#e0ecf6" stroke="#c8beb4" stroke-width="1.3"/><rect x="19.6" y="7.3" width="0.8" height="18.4" fill="#d3e1ee"/><rect x="20" y="6" width="4" height="5" fill="#e58a85"/><g fill="#a9a9ab"><rect x="9" y="10.5" width="4.8" height="2" rx="1"/><rect x="9" y="15" width="8" height="2" rx="1"/><rect x="9" y="19.2" width="8" height="2" rx="1"/><rect x="23" y="10.5" width="8" height="2" rx="1"/><rect x="23" y="15" width="8" height="2" rx="1"/><rect x="23" y="19.2" width="8" height="2" rx="1"/></g></svg>
<svg style="left:712px;top:628px" width="40" height="40" viewBox="0 0 40 40"><g stroke="#e2979b" stroke-width="5.6" stroke-linecap="round"><line x1="6.9" y1="7" x2="33.1" y2="33"/><line x1="33.1" y1="7" x2="6.9" y2="33"/></g></svg>
<svg style="left:1355px;top:638.2px" width="20" height="20" viewBox="0 0 20 20"><path d="M3.5 6.5 L10 13.2 L16.5 6.5" fill="none" stroke="#6e6e6e" stroke-width="2.6" stroke-linecap="round" stroke-linejoin="round"/></svg>
<svg style="left:661px;top:851px" width="20" height="20" viewBox="0 0 20 20"><path d="M3.5 6.5 L10 13.2 L16.5 6.5" fill="none" stroke="#6e6e6e" stroke-width="2.6" stroke-linecap="round" stroke-linejoin="round"/></svg>
</div></body></html>
